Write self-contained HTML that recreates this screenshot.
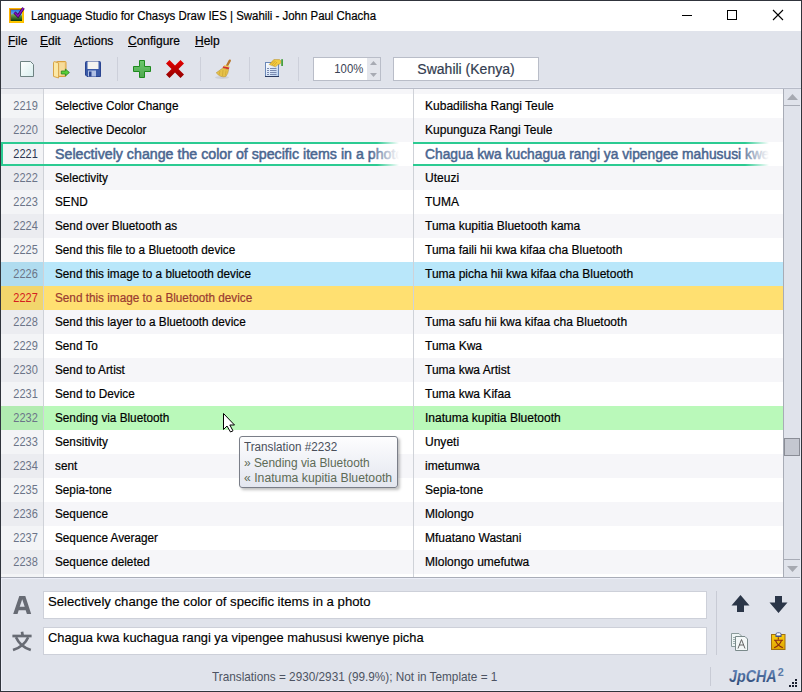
<!DOCTYPE html>
<html><head><meta charset="utf-8">
<style>
*{margin:0;padding:0;box-sizing:border-box}
html,body{width:802px;height:692px;overflow:hidden}
body{position:relative;background:#e0e3eb;font-family:"Liberation Sans",sans-serif;color:#000}
.abs{position:absolute}
svg{position:absolute;overflow:visible}
#bt{left:0;top:0;width:802px;height:1px;background:#30343c}
#bl{left:0;top:0;width:1px;height:692px;background:#30343c}
#br{left:801px;top:0;width:1px;height:692px;background:#30343c}
#bb{left:0;top:691px;width:802px;height:1px;background:#30343c}
#hl{left:1px;top:578px;width:1px;height:113px;background:#eceef8}
#hb{left:1px;top:690px;width:800px;height:1px;background:#eceef8}
#hr{left:800px;top:89px;width:1px;height:602px;background:#e8ebf4}
#ht{left:1px;top:578px;width:800px;height:1px;background:#eceef8}
#title{left:1px;top:1px;width:800px;height:30px;background:#fff}
#ttext{left:31px;top:9px;font-size:12.5px;line-height:14px;color:#000;white-space:nowrap;-webkit-text-stroke:0.2px #000;transform:scaleX(.915);transform-origin:0 0}
.menu{top:34px;font-size:12px;line-height:14px;white-space:nowrap;color:#000;-webkit-text-stroke:0.2px #000}
.menu u{text-decoration:underline;text-underline-offset:1px}
#tbhl{left:1px;top:87px;width:800px;height:1px;background:#e4e7f0}
#tbline{left:1px;top:88px;width:800px;height:1px;background:#b8bcc8}
.sep{position:absolute;width:1px;top:57px;height:24px;background:#cdd0da}
#zoom{left:313px;top:57px;width:68px;height:24px;border:1px solid #b9bdc8;background:#fff}
#zoom .t{position:absolute;right:17px;top:4px;font-size:13px;line-height:14px;color:#3a4254;transform:scaleX(.87);transform-origin:100% 0}
#zoom .sp{position:absolute;left:53px;top:0;width:13px;height:22px;background:#e4e6ec}
#lang{left:393px;top:57px;width:146px;height:24px;border:1px solid #b9bdc8;background:#fff;text-align:center;font-size:14px;line-height:22px;color:#333c50;-webkit-text-stroke:0.2px #333c50}
#list{left:1px;top:89px;width:782px;height:488px;background:#fff;overflow:hidden}
.row{position:absolute;left:0;width:782px;height:24px}
.row .g{position:absolute;left:0;top:0;width:42px;height:24px;font-size:12.5px;line-height:24px;color:#6b7488}
.row .g span{position:absolute;right:5px;top:0;transform:scaleX(.88);transform-origin:100% 0}
.row .c1{position:absolute;left:43px;top:0;width:369px;height:24px;padding-left:11px;font-size:12.5px;line-height:24px;white-space:nowrap;overflow:hidden}
.row span.s{display:inline-block;transform:scaleX(.94);transform-origin:0 0;-webkit-text-stroke:0.2px currentColor}
.row .c2 span.s{transform:scaleX(.962)}
.row .c2{position:absolute;left:413px;top:0;width:369px;height:24px;padding-left:11px;font-size:12.5px;line-height:24px;white-space:nowrap;overflow:hidden}
.odd .g{background:#f3f4f6}.odd .c1,.odd .c2{background:#fff}
.even .g{background:#ebecf0}.even .c1,.even .c2{background:#f6f6f9}
.blue .g{background:#b0dcef}.blue .c1,.blue .c2{background:#b9e7fa}
.yellow .g{background:#f2d66c}.yellow .c1,.yellow .c2{background:#ffe071}
.yellow .g{color:#d42020}.yellow .c1{color:#9a3a30}
.green .g{background:#b1ecb1}.green .c1,.green .c2{background:#baf9ba}
#vsep{left:43px;top:89px;width:1px;height:488px;background:rgba(95,105,125,.3)}
#vsep2{left:413px;top:89px;width:1px;height:488px;background:rgba(95,105,125,.3)}
.sel .c1,.sel .c2{font-size:14px;color:#4a6690;-webkit-text-stroke:0.6px #4a6690}
.sel span.s{transform:scaleX(1.015);-webkit-text-stroke:0.5px currentColor}
.sel .c2 span.s{transform:scaleX(.986)}
.sel .g{color:#2b3650}
.selb{position:absolute;height:2px}
.fade{position:absolute;top:144px;height:20px;width:30px;background:linear-gradient(to right,rgba(255,255,255,0),#fff 97%)}
#listbot{left:1px;top:577px;width:800px;height:1px;background:#a9adb8}
#sb{left:783px;top:89px;width:18px;height:488px;background:#e0e3eb;border-left:1px solid #a8acb6}
#sbup{left:784px;top:105px;width:16px;height:1px;background:#a8acb6}
#sbdn{left:784px;top:559px;width:16px;height:1px;background:#a8acb6}
#thumb{left:784px;top:438px;width:16px;height:18px;background:#c4c7d0;border:1px solid #8a8d96}
.box{position:absolute;left:43px;width:664px;height:28px;background:#fff;border:1px solid #cdd0d9;font-size:13px;line-height:14px;white-space:nowrap;padding-left:4px;color:#000;-webkit-text-stroke:0.15px #000}
#status{left:212px;top:669.5px;font-size:12.2px;line-height:14px;color:#4d5362;white-space:nowrap;transform:scaleX(.966);transform-origin:0 0}
#tip{left:239px;top:436px;width:159px;height:52px;border:1px solid #7a7e88;border-radius:3px;background:linear-gradient(#fdfdfe,#e3e6ef);box-shadow:2px 2px 3px rgba(0,0,0,0.25)}
.tl{position:absolute;left:4px;font-size:12.5px;line-height:14px;white-space:nowrap;transform:scaleX(.935);transform-origin:0 0}
</style></head><body>
<div class="abs" id="title"></div>
<svg style="left:0;top:0" width="30" height="30">
  <defs><linearGradient id="gsky" x1="0" y1="0" x2="0" y2="1"><stop offset="0" stop-color="#2a78e0"/><stop offset="1" stop-color="#e8f4ff"/></linearGradient>
  <linearGradient id="ghill" x1="0" y1="0" x2="0" y2="1"><stop offset="0" stop-color="#80b860"/><stop offset="1" stop-color="#0e3a08"/></linearGradient></defs>
  <rect x="9" y="8" width="15" height="15" fill="#ffb400"/>
  <rect x="10" y="9" width="12" height="12" fill="#a86a20"/>
  <rect x="11" y="10" width="11" height="11" fill="url(#gsky)"/>
  <path d="M11 14.5 Q17 12.5 22 15.5 L22 21 L11 21Z" fill="url(#ghill)"/>
  <rect x="10" y="21" width="13" height="1.5" fill="#ffcc00"/>
  <rect x="22" y="9" width="1.5" height="13" fill="#ffcc00"/>
  <path d="M14.5 12.5 L18 16 L23.5 8" fill="none" stroke="#2a0050" stroke-width="3"/>
  <path d="M14.5 12.5 L18 16 L23.5 8" fill="none" stroke="#8a10c0" stroke-width="1.5"/>
</svg>
<div class="abs" id="ttext">Language Studio for Chasys Draw IES | Swahili - John Paul Chacha</div>
<svg style="left:0;top:0" width="802" height="30">
  <rect x="682" y="15" width="10" height="1" fill="#000"/>
  <rect x="727.5" y="10.5" width="9" height="9" fill="none" stroke="#000"/>
  <path d="M773 10 L783 20 M783 10 L773 20" stroke="#000" stroke-width="1.1"/>
</svg>
<div class="abs menu" style="left:8px"><u>F</u>ile</div>
<div class="abs menu" style="left:40px"><u>E</u>dit</div>
<div class="abs menu" style="left:74px"><u>A</u>ctions</div>
<div class="abs menu" style="left:128px"><u>C</u>onfigure</div>
<div class="abs menu" style="left:195px"><u>H</u>elp</div>
<!-- toolbar icons -->
<svg style="left:0;top:0" width="300" height="88">
  <defs>
    <linearGradient id="gdoc" x1="0" y1="0" x2="1" y2="1"><stop offset="0" stop-color="#ffffff"/><stop offset="1" stop-color="#d8eeee"/></linearGradient>
    <linearGradient id="gx" x1="0" y1="0" x2="0" y2="1"><stop offset="0" stop-color="#e80000"/><stop offset="1" stop-color="#900000"/></linearGradient>
    <linearGradient id="gpl" x1="0" y1="0" x2="0" y2="1"><stop offset="0" stop-color="#6cc86c"/><stop offset="1" stop-color="#50a850"/></linearGradient>
    <linearGradient id="gprop" x1="0" y1="0" x2="1" y2="1"><stop offset="0" stop-color="#ffffff"/><stop offset="1" stop-color="#b8d0f0"/></linearGradient>
  </defs>
  <!-- new -->
  <path d="M20.5 61.5 H30.5 L33.5 64.5 V76.5 H20.5 Z" fill="url(#gdoc)" stroke="#6e8282"/>
  <!-- open folder -->
  <rect x="56.5" y="61.5" width="9.5" height="15" rx="0.8" fill="#f3cf84" stroke="#d9a040"/>
  <rect x="58.5" y="63" width="6" height="12" fill="#f6dc9c"/>
  <path d="M53.5 62.5 Q53.5 61.5 54.8 61.7 L58.6 63 V78 L53.5 76.4 Z" fill="#fbe8a6" stroke="#d8a448"/>
  <path d="M61.3 71 H65.4 V69 L69.4 72.5 L65.4 76 V74 H61.3 Z" fill="#58d038" stroke="#2a8020" stroke-width="0.8"/>
  <!-- save -->
  <path d="M85.5 62.5 Q85.5 61.5 86.5 61.5 H99.5 Q100.5 61.5 100.5 62.5 V76.5 H87 L85.5 75 Z" fill="#3a5aa8" stroke="#2a4490"/>
  <rect x="87.5" y="61.5" width="11" height="7.5" fill="#f4f4f0"/>
  <rect x="88" y="70.5" width="8" height="6" fill="#b0c0e4"/>
  <rect x="89" y="71.5" width="2.5" height="5" fill="#2a4490"/>
  <!-- separator -->
  <!-- plus -->
  <path d="M139.5 60.5 H144.5 V66.5 H150.5 V71.5 H144.5 V77.5 H139.5 V71.5 H133.5 V66.5 H139.5 Z" fill="url(#gpl)" stroke="#1e8a1e"/>
  <!-- X -->
  <path d="M166 63.5 L169.5 60 L175 65.5 L180.5 60 L184 63.5 L178.5 69 L184 74.5 L180.5 78 L175 72.5 L169.5 78 L166 74.5 L171.5 69 Z" fill="url(#gx)"/>
  <!-- broom -->
  <ellipse cx="222" cy="77.5" rx="7" ry="1.5" fill="#c4c8d2" opacity="0.7"/>
  <path d="M229.8 60.6 L227 65.8" stroke="#b8782c" stroke-width="2.3" stroke-linecap="round"/>
  <path d="M224.2 65 L229.6 66.2 L229.2 67.6 L223.6 66.4Z" fill="#f0d060"/>
  <path d="M223.2 66.2 L229.4 67.4 L228.6 69.6 L222.6 68.2Z" fill="#d43030"/>
  <path d="M222.8 68 L228.6 69.6 Q228.4 73.5 225.8 76.6 Q220.5 78 216.2 72.8 Z" fill="#e6c24a" stroke="#b08a34" stroke-width="0.5"/>
  <path d="M220 71 L219 75 M223 70 L222.5 76 M226 70.5 L225.5 75.5" stroke="#c8a030" stroke-width="0.6"/>
  <!-- properties -->
  <rect x="265.5" y="62.5" width="13" height="14" fill="url(#gprop)" stroke="#6a88b8"/>
  <rect x="265" y="76" width="14" height="1" fill="#2a3a60"/>
  <g fill="#7a8ab0">
    <rect x="267" y="68" width="2" height="1"/><rect x="270" y="68" width="6.5" height="1"/>
    <rect x="267" y="70" width="2" height="1"/><rect x="270" y="70" width="6.5" height="1"/>
    <rect x="267" y="72" width="2" height="1"/><rect x="270" y="72" width="6.5" height="1"/>
    <rect x="267" y="74" width="2" height="1"/><rect x="270" y="74" width="6.5" height="1"/>
  </g>
  <path d="M269.2 64.5 L273.8 59.6 H279.5 Q281.5 60.5 281 62.5 Q280.5 64.3 278 64.6 L275.5 66.8 Z" fill="#f4cc40" stroke="#b08a28" stroke-width="0.5"/>
  <path d="M270.5 64 L274 60.5 M272 65 L275.5 61 M273.5 66 L277 62" stroke="#c89a28" stroke-width="0.7"/>
  <rect x="281.2" y="59.2" width="1.8" height="6.8" fill="#48a040"/>
</svg>
<div class="sep" style="left:117px"></div>
<div class="sep" style="left:200px"></div>
<div class="sep" style="left:249px"></div>
<div class="sep" style="left:298px"></div>
<div class="abs" id="zoom"><span class="t">100%</span><div class="sp"></div>
<svg style="left:53px;top:0" width="13" height="22">
<path d="M3 7 L6.5 3 L10 7Z" fill="#a8abb3"/><path d="M3 15 L6.5 19 L10 15Z" fill="#a8abb3"/></svg></div>
<div class="abs" id="lang">Swahili (Kenya)</div>
<div class="abs" id="tbhl"></div>
<div class="abs" id="tbline"></div>
<div class="abs" id="list">
<div class="row even" style="top:-19px"><div class="g"></div><div class="c1"></div><div class="c2"></div></div>
<div class="row odd" style="top:5px"><div class="g"><span>2219</span></div><div class="c1"><span class="s">Selective Color Change</span></div><div class="c2"><span class="s">Kubadilisha Rangi Teule</span></div></div>
<div class="row even" style="top:29px"><div class="g"><span>2220</span></div><div class="c1"><span class="s">Selective Decolor</span></div><div class="c2"><span class="s">Kupunguza Rangi Teule</span></div></div>
<div class="row odd sel" style="top:53px"><div class="g"><span>2221</span></div><div class="c1"><span class="s">Selectively change the color of specific items in a photo</span></div><div class="c2"><span class="s">Chagua kwa kuchagua rangi ya vipengee mahususi kwenye picha</span></div></div>
<div class="row even" style="top:77px"><div class="g"><span>2222</span></div><div class="c1"><span class="s">Selectivity</span></div><div class="c2"><span class="s">Uteuzi</span></div></div>
<div class="row odd" style="top:101px"><div class="g"><span>2223</span></div><div class="c1"><span class="s">SEND</span></div><div class="c2"><span class="s">TUMA</span></div></div>
<div class="row even" style="top:125px"><div class="g"><span>2224</span></div><div class="c1"><span class="s">Send over Bluetooth as</span></div><div class="c2"><span class="s">Tuma kupitia Bluetooth kama</span></div></div>
<div class="row odd" style="top:149px"><div class="g"><span>2225</span></div><div class="c1"><span class="s">Send this file to a Bluetooth device</span></div><div class="c2"><span class="s">Tuma faili hii kwa kifaa cha Bluetooth</span></div></div>
<div class="row blue" style="top:173px"><div class="g"><span>2226</span></div><div class="c1"><span class="s">Send this image to a bluetooth device</span></div><div class="c2"><span class="s">Tuma picha hii kwa kifaa cha Bluetooth</span></div></div>
<div class="row yellow" style="top:197px"><div class="g"><span>2227</span></div><div class="c1"><span class="s">Send this image to a Bluetooth device</span></div><div class="c2"><span class="s"></span></div></div>
<div class="row even" style="top:221px"><div class="g"><span>2228</span></div><div class="c1"><span class="s">Send this layer to a Bluetooth device</span></div><div class="c2"><span class="s">Tuma safu hii kwa kifaa cha Bluetooth</span></div></div>
<div class="row odd" style="top:245px"><div class="g"><span>2229</span></div><div class="c1"><span class="s">Send To</span></div><div class="c2"><span class="s">Tuma Kwa</span></div></div>
<div class="row even" style="top:269px"><div class="g"><span>2230</span></div><div class="c1"><span class="s">Send to Artist</span></div><div class="c2"><span class="s">Tuma kwa Artist</span></div></div>
<div class="row odd" style="top:293px"><div class="g"><span>2231</span></div><div class="c1"><span class="s">Send to Device</span></div><div class="c2"><span class="s">Tuma kwa Kifaa</span></div></div>
<div class="row green" style="top:317px"><div class="g"><span>2232</span></div><div class="c1"><span class="s">Sending via Bluetooth</span></div><div class="c2"><span class="s">Inatuma kupitia Bluetooth</span></div></div>
<div class="row odd" style="top:341px"><div class="g"><span>2233</span></div><div class="c1"><span class="s">Sensitivity</span></div><div class="c2"><span class="s">Unyeti</span></div></div>
<div class="row even" style="top:365px"><div class="g"><span>2234</span></div><div class="c1"><span class="s">sent</span></div><div class="c2"><span class="s">imetumwa</span></div></div>
<div class="row odd" style="top:389px"><div class="g"><span>2235</span></div><div class="c1"><span class="s">Sepia-tone</span></div><div class="c2"><span class="s">Sepia-tone</span></div></div>
<div class="row even" style="top:413px"><div class="g"><span>2236</span></div><div class="c1"><span class="s">Sequence</span></div><div class="c2"><span class="s">Mlolongo</span></div></div>
<div class="row odd" style="top:437px"><div class="g"><span>2237</span></div><div class="c1"><span class="s">Sequence Averager</span></div><div class="c2"><span class="s">Mfuatano Wastani</span></div></div>
<div class="row even" style="top:461px"><div class="g"><span>2238</span></div><div class="c1"><span class="s">Sequence deleted</span></div><div class="c2"><span class="s">Mlolongo umefutwa</span></div></div>
<div class="row odd" style="top:485px"><div class="g"></div><div class="c1"></div><div class="c2"></div></div>
</div>
<div class="abs" id="vsep"></div>
<div class="abs" id="vsep2"></div>
<!-- selection border -->
<div class="abs selb" style="left:1px;top:142px;width:398px;background:linear-gradient(to right,#2ccb92 0,#2ccb92 376px,rgba(44,203,146,0) 398px)"></div>
<div class="abs selb" style="left:1px;top:164px;width:398px;background:linear-gradient(to right,#2ccb92 0,#2ccb92 376px,rgba(44,203,146,0) 398px)"></div>
<div class="abs" style="left:1px;top:142px;width:2px;height:24px;background:#2ccb92"></div>
<div class="abs fade" style="left:370px"></div>
<div class="abs" style="left:399px;top:144px;width:14px;height:20px;background:#fff"></div>
<div class="abs selb" style="left:413px;top:142px;width:356px;background:linear-gradient(to right,#2ccb92 0,#2ccb92 332px,rgba(44,203,146,0) 356px)"></div>
<div class="abs selb" style="left:413px;top:164px;width:356px;background:linear-gradient(to right,#2ccb92 0,#2ccb92 332px,rgba(44,203,146,0) 356px)"></div>
<div class="abs fade" style="left:740px"></div>
<div class="abs" style="left:769px;top:144px;width:14px;height:20px;background:#fff"></div>
<div class="abs" id="sb"></div>
<svg style="left:784px;top:89px" width="17" height="488">
<path d="M3 11 L8.5 5 L14 11Z" fill="#a6a9b1"/>
<path d="M3 477 L8.5 483 L14 477Z" fill="#a6a9b1"/>
</svg>
<div class="abs" id="sbup"></div>
<div class="abs" id="sbdn"></div>
<div class="abs" id="thumb"></div>
<div class="abs" id="listbot"></div>
<!-- cursor -->
<svg style="left:0;top:0" width="802" height="692">
<path d="M223.5 413.5 V429.5 L227 426 L230.5 432 L233 430.8 L229.8 425 H234.5 Z" fill="#fff" stroke="#000" stroke-width="1" stroke-linejoin="miter"/>
</svg>
<!-- tooltip -->
<div class="abs" id="tip">
<div class="tl" style="top:3px;color:#4a4f5a">Translation #2232</div>
<div class="tl" style="top:19px;color:#5d6a55;transform:scaleX(.952)">» Sending via Bluetooth</div>
<div class="tl" style="top:34px;color:#5d6a55;transform:scaleX(.978)">« Inatuma kupitia Bluetooth</div>
</div>
<!-- bottom panel -->
<svg style="left:0;top:0" width="802" height="692">
<path fill-rule="evenodd" fill="#676b74" d="M19.3 596 H25.3 L31.2 614 H26.9 L25.7 610.3 H18.7 L17.5 614 H13.2 Z M19.7 606.8 H24.7 L22.2 599.2 Z"/>
<g fill="none" stroke="#676b74" stroke-width="2.7">
<path d="M22 631.8 L22.6 635.3"/>
<path d="M12.4 636 H31.6"/>
<path d="M16 637.2 Q20 646.5 30.8 650"/>
<path d="M28.2 637.2 Q24 646.5 13 650"/>
</g>
</svg>
<div class="box" style="top:591px;padding-top:3px"><span style="display:inline-block;transform:scaleX(1.012);transform-origin:0 0">Selectively change the color of specific items in a photo</span></div>
<div class="box" style="top:627px;padding-top:3px"><span style="display:inline-block;transform:scaleX(.988);transform-origin:0 0">Chagua kwa kuchagua rangi ya vipengee mahususi kwenye picha</span></div>
<div class="abs" style="left:716px;top:591px;width:1px;height:64px;background:#c8cbd5"></div>
<div class="abs" style="left:710px;top:667px;width:1px;height:19px;background:#c8cbd5"></div>
<svg style="left:0;top:0" width="802" height="692">
<path d="M740.5 595 L749.5 605.5 H744 V612 H737 V605.5 H731.5 Z" fill="#2b3648"/>
<path d="M778.5 613 L787.5 602.5 H782 V596 H775 V602.5 H769.5 Z" fill="#2b3648"/>
<!-- copy icon -->
<path d="M731.5 633.5 H739 L741.5 636 V646.5 H731.5 Z" fill="#eef4f4" stroke="#8a9a9a"/>
<g stroke="#a0b0b0"><path d="M733 637.5 H735 M733 639.5 H735 M733 641.5 H735 M733 643.5 H735"/></g>
<path d="M735.5 636.5 H745 L747.5 639 V650.5 H735.5 Z" fill="#f4f8f8" stroke="#7a8a8a"/>
<path d="M738 648.5 L741.5 639.5 L745 648.5 M739.3 645 H743.7" fill="none" stroke="#555" stroke-width="0.9"/>
<!-- clipboard -->
<linearGradient id="gclip" x1="0" y1="0" x2="0" y2="1"><stop offset="0" stop-color="#f8cc10"/><stop offset="1" stop-color="#e0a400"/></linearGradient>
<rect x="771.5" y="634.5" width="13.5" height="15" fill="url(#gclip)" stroke="#a07010"/>
<path d="M776 636.5 V634.3 Q776 632.8 777.5 632.8 H779.5 Q781 632.8 781 634.3 V636.5 Z" fill="#fff" stroke="#4a5a90" stroke-width="0.9"/>
<rect x="775.5" y="635.5" width="6" height="1.2" fill="#3a4a80"/>
<path d="M778.3 637.3 V639.6 M774 640.3 H783 M775.6 640.8 Q777.5 645.5 782.8 647.8 M781.4 640.8 Q779.5 645.5 774.2 647.8" fill="none" stroke="#8a2a10" stroke-width="1.1"/>
<!-- logo -->
<defs><linearGradient id="glogo" x1="0" y1="0" x2="0" y2="1"><stop offset="0" stop-color="#6a8cc0"/><stop offset="1" stop-color="#294572"/></linearGradient></defs>
<text x="729" y="682" font-family="Liberation Sans" font-weight="bold" font-style="italic" font-size="15.6" fill="url(#glogo)" textLength="47.5" lengthAdjust="spacingAndGlyphs">JpCHA</text>
<text x="777.8" y="676.3" font-family="Liberation Sans" font-weight="bold" font-size="10" fill="#5a7aa8" textLength="6" lengthAdjust="spacingAndGlyphs">2</text>
<g fill="#1a2030">
<rect x="795" y="679" width="2" height="2"/>
<rect x="792" y="682" width="2" height="2"/><rect x="795" y="682" width="2" height="2"/>
<rect x="789" y="685" width="2" height="2"/><rect x="792" y="685" width="2" height="2"/><rect x="795" y="685" width="2" height="2"/>
</g>
</svg>
<div class="abs" id="status">Translations = 2930/2931 (99.9%); Not in Template = 1</div>
<div class="abs" id="ht"></div><div class="abs" id="hl"></div><div class="abs" id="hb"></div><div class="abs" id="hr"></div>
<div class="abs" id="bt"></div><div class="abs" id="bl"></div><div class="abs" id="br"></div><div class="abs" id="bb"></div>
</body></html>
